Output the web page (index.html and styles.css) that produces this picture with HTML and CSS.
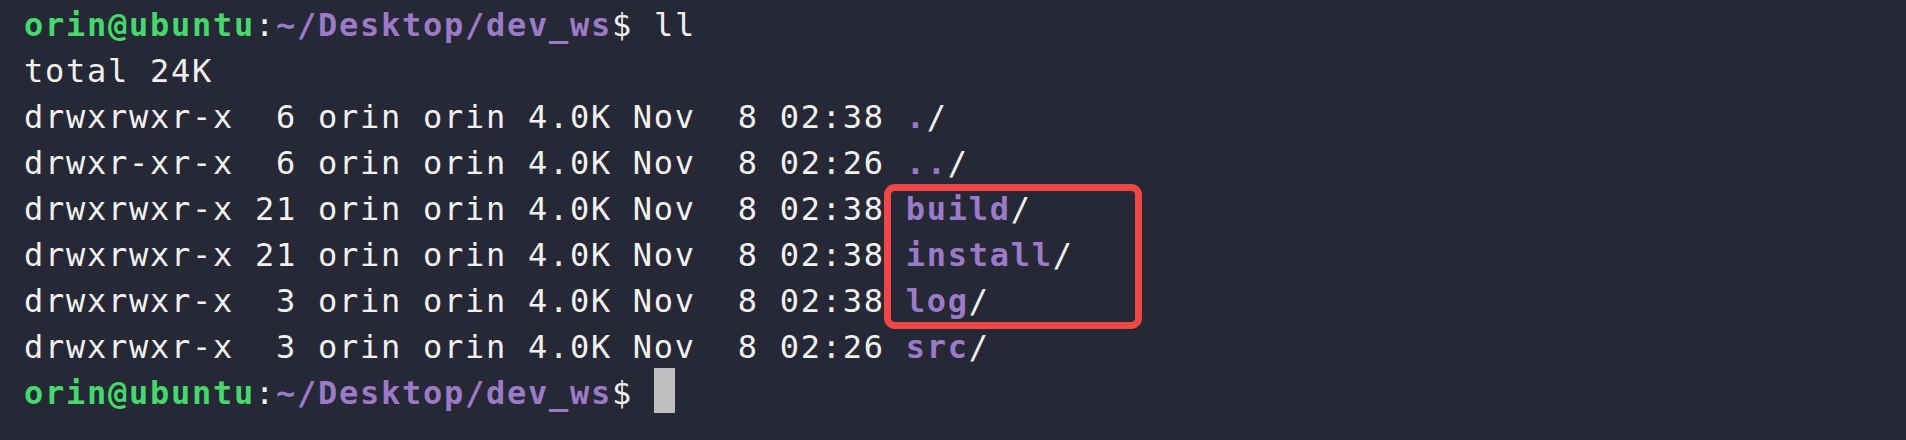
FILE: index.html
```html
<!DOCTYPE html>
<html>
<head>
<meta charset="utf-8">
<link rel="stylesheet" href="styles.css">
</head>
<body>
<div class="term">
<pre class="out"><span class="u">orin@ubuntu</span>:<span class="p">~/Desktop/dev_ws</span>$ ll
total 24K
drwxrwxr-x  6 orin orin 4.0K Nov  8 02:38 <span class="d">.</span>/
drwxr-xr-x  6 orin orin 4.0K Nov  8 02:26 <span class="d">..</span>/
drwxrwxr-x 21 orin orin 4.0K Nov  8 02:38 <span class="d">build</span>/
drwxrwxr-x 21 orin orin 4.0K Nov  8 02:38 <span class="d">install</span>/
drwxrwxr-x  3 orin orin 4.0K Nov  8 02:38 <span class="d">log</span>/
drwxrwxr-x  3 orin orin 4.0K Nov  8 02:26 <span class="d">src</span>/
<span class="u">orin@ubuntu</span>:<span class="p">~/Desktop/dev_ws</span>$ <span class="cursor"></span></pre>
<div class="highlight"></div>
</div>
</body>
</html>
```
FILE: styles.css
```css
html, body {
  margin: 0;
  padding: 0;
  background: #262836;
  height: 100%;
}
.term {
  position: relative;
  padding: 2px 0 0 24px;
}
.out {
  margin: 0;
  font-family: "DejaVu Sans Mono", monospace;
  font-size: 32px;
  letter-spacing: 1.73px;
  line-height: 46px;
  color: #f2f2f2;
  white-space: pre;
}
.u {
  color: #45d86c;
  font-weight: bold;
}
.p {
  color: #9b7bc7;
  font-weight: bold;
}
.d {
  color: #9b7bc7;
  font-weight: bold;
}
.cursor {
  display: inline-block;
  width: 21px;
  height: 45px;
  background: #bfbfbf;
  vertical-align: top;
  margin-top: -2px;
}
.highlight {
  position: absolute;
  left: 884px;
  top: 184px;
  width: 258px;
  height: 145px;
  box-sizing: border-box;
  border: 7px solid #ef4646;
  border-radius: 11px;
}
```
